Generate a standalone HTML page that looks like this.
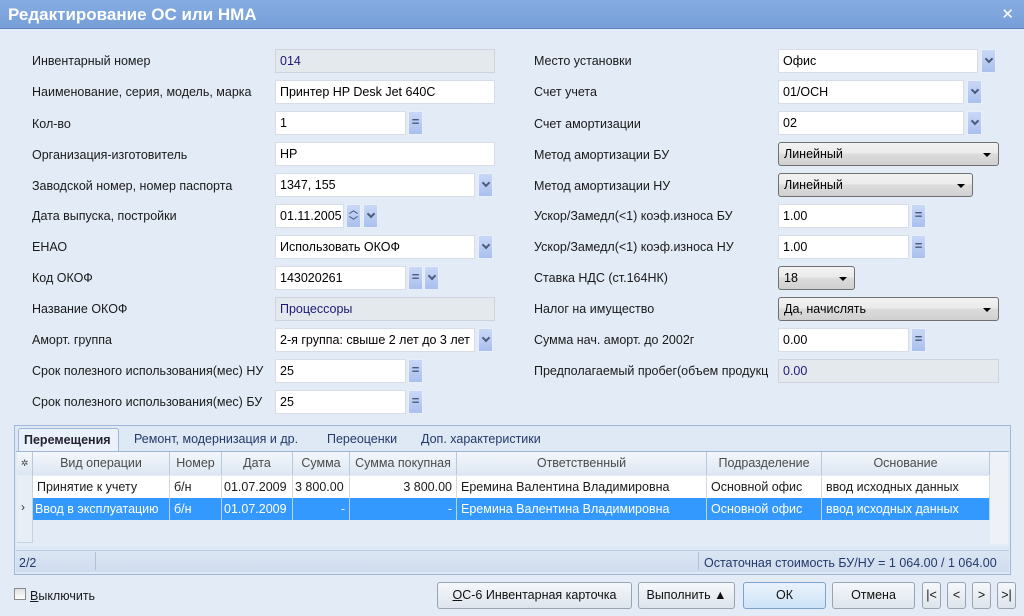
<!DOCTYPE html>
<html><head><meta charset="utf-8"><style>
*{box-sizing:border-box;margin:0;padding:0}
body{width:1024px;height:616px;overflow:hidden;background:#e3ecf6;font-family:"Liberation Sans","DejaVu Sans",sans-serif;font-size:12.5px;color:#1a1a1a;position:relative}
.a{position:absolute}
.title{left:0;top:0;width:1024px;height:29px;background:linear-gradient(#86ade2,#779fd8);border-bottom:1px solid #5f86c3;color:#fff;font-weight:bold;font-size:17px;padding:5px 0 0 8px}
.x{right:10px;top:5px;color:#fff;font-weight:bold;font-size:15px}
.lb{white-space:nowrap;height:14px;line-height:14px}
.in{height:24px;background:#fff;border:1px solid #d6dde6;padding:4px 0 0 4px;white-space:nowrap;overflow:hidden;color:#000}
.ro{background:#e4e9ee;border:1px solid #cdd4dc;color:#1a1a7a}
.bt{width:15px;height:24px;background:linear-gradient(#c9d8f6,#a9c0ee);border:1px solid #e8eefa;color:#4a5a7a;text-align:center;font-size:13px;line-height:20px;font-weight:bold}
.dd::after{content:"";position:absolute;left:4px;top:6px;width:4px;height:4px;border-right:2px solid #4a5a7a;border-bottom:2px solid #4a5a7a;transform:rotate(45deg)}
.sel{height:24px;border:1px solid #707070;border-radius:3px;background:linear-gradient(#f2f2f2 0,#ebebeb 45%,#dcdcdc 50%,#d0d0d0 100%);padding:4px 0 0 5px;color:#000}
.sel::after{content:"";position:absolute;right:7px;top:10px;border-left:4px solid transparent;border-right:4px solid transparent;border-top:4px solid #000}
.hd{top:452px;height:23px;background:linear-gradient(#f4f7fb,#dce6f2);border-right:1px solid #b9c9dd;color:#4a4a4a;text-align:center;line-height:23px}
.c{height:22px;line-height:22px;padding:0 4px;white-space:nowrap;overflow:hidden;border-right:1px solid #cfd8e3}
.sb{background:#3399ff;color:#fff;border-right:1px solid #b9d4ee}
.btn{top:582px;height:27px;border:1px solid #9aa4b0;border-radius:3px;background:linear-gradient(#f6f8fb,#dde4ec);text-align:center;line-height:25px;color:#111}
</style></head><body>
<div class="a title">Редактирование ОС или НМА</div>
<div class="a x">✕</div>

<div class="a lb" style="left:32px;top:54px">Инвентарный номер</div>
<div class="a lb" style="left:32px;top:85px">Наименование, серия, модель, марка</div>
<div class="a lb" style="left:32px;top:117px">Кол-во</div>
<div class="a lb" style="left:32px;top:148px">Организация-изготовитель</div>
<div class="a lb" style="left:32px;top:179px">Заводской номер, номер паспорта</div>
<div class="a lb" style="left:32px;top:209px">Дата выпуска, постройки</div>
<div class="a lb" style="left:32px;top:240px">ЕНАО</div>
<div class="a lb" style="left:32px;top:271px">Код ОКОФ</div>
<div class="a lb" style="left:32px;top:302px">Название ОКОФ</div>
<div class="a lb" style="left:32px;top:333px">Аморт. группа</div>
<div class="a lb" style="left:32px;top:364px">Срок полезного использования(мес) НУ</div>
<div class="a lb" style="left:32px;top:395px">Срок полезного использования(мес) БУ</div>

<div class="a in ro" style="left:275px;top:49px;width:220px">014</div>
<div class="a in" style="left:275px;top:80px;width:220px">Принтер HP Desk Jet 640C</div>
<div class="a in" style="left:275px;top:111px;width:131px">1</div><div class="a bt" style="left:408px;top:111px">=</div>
<div class="a in" style="left:275px;top:142px;width:220px">HP</div>
<div class="a in" style="left:275px;top:173px;width:200px">1347, 155</div><div class="a bt dd" style="left:478px;top:173px"></div>
<div class="a in" style="left:275px;top:204px;width:69px">01.11.2005</div>
<div class="a bt" style="left:346px;top:204px;font-size:9px;line-height:11px">︿<br>﹀</div><div class="a bt dd" style="left:363px;top:204px"></div>
<div class="a in" style="left:275px;top:235px;width:200px">Использовать ОКОФ</div><div class="a bt dd" style="left:478px;top:235px"></div>
<div class="a in" style="left:275px;top:266px;width:131px">143020261</div><div class="a bt" style="left:408px;top:266px">=</div><div class="a bt dd" style="left:424px;top:266px"></div>
<div class="a in ro" style="left:275px;top:297px;width:220px">Процессоры</div>
<div class="a in" style="left:275px;top:328px;width:200px">2-я группа: свыше 2 лет до 3 лет</div><div class="a bt dd" style="left:478px;top:328px"></div>
<div class="a in" style="left:275px;top:359px;width:131px">25</div><div class="a bt" style="left:408px;top:359px">=</div>
<div class="a in" style="left:275px;top:390px;width:131px">25</div><div class="a bt" style="left:408px;top:390px">=</div>

<div class="a lb" style="left:534px;top:54px">Место установки</div>
<div class="a lb" style="left:534px;top:85px">Счет учета</div>
<div class="a lb" style="left:534px;top:117px">Счет амортизации</div>
<div class="a lb" style="left:534px;top:148px">Метод амортизации БУ</div>
<div class="a lb" style="left:534px;top:179px">Метод амортизации НУ</div>
<div class="a lb" style="left:534px;top:209px">Ускор/Замедл(&lt;1) коэф.износа БУ</div>
<div class="a lb" style="left:534px;top:240px">Ускор/Замедл(&lt;1) коэф.износа НУ</div>
<div class="a lb" style="left:534px;top:271px">Ставка НДС (ст.164НК)</div>
<div class="a lb" style="left:534px;top:302px">Налог на имущество</div>
<div class="a lb" style="left:534px;top:333px">Сумма нач. аморт. до 2002г</div>
<div class="a lb" style="left:534px;top:364px;width:238px;overflow:hidden">Предполагаемый пробег(объем продукц</div>

<div class="a in" style="left:778px;top:49px;width:200px">Офис</div><div class="a bt dd" style="left:981px;top:49px"></div>
<div class="a in" style="left:778px;top:80px;width:186px">01/ОСН</div><div class="a bt dd" style="left:967px;top:80px"></div>
<div class="a in" style="left:778px;top:111px;width:186px">02</div><div class="a bt dd" style="left:967px;top:111px"></div>
<div class="a sel" style="left:778px;top:142px;width:221px">Линейный</div>
<div class="a sel" style="left:778px;top:173px;width:195px">Линейный</div>
<div class="a in" style="left:778px;top:204px;width:131px">1.00</div><div class="a bt" style="left:911px;top:204px">=</div>
<div class="a in" style="left:778px;top:235px;width:131px">1.00</div><div class="a bt" style="left:911px;top:235px">=</div>
<div class="a sel" style="left:778px;top:266px;width:77px">18</div>
<div class="a sel" style="left:778px;top:297px;width:221px">Да, начислять</div>
<div class="a in" style="left:778px;top:328px;width:131px">0.00</div><div class="a bt" style="left:911px;top:328px">=</div>
<div class="a in ro" style="left:778px;top:359px;width:221px">0.00</div>

<div class="a" style="left:14px;top:425px;width:997px;height:150px;border:1px solid #9fb8da;background:#dfe9f5"></div>
<div class="a" style="left:18px;top:428px;width:101px;height:24px;background:#eaf1fa;border:1px solid #9fb8da;border-bottom:none;border-radius:3px 3px 0 0;font-weight:bold;padding:4px 0 0 5px;color:#223">Перемещения</div>
<div class="a lb" style="left:134px;top:432px;color:#223a6a">Ремонт, модернизация и др.</div>
<div class="a lb" style="left:327px;top:432px;color:#223a6a">Переоценки</div>
<div class="a lb" style="left:421px;top:432px;color:#223a6a">Доп. характеристики</div>

<div class="a" style="left:16px;top:451px;width:993px;height:95px;background:#e3ecf6;border-top:1px solid #9fb8da"></div>
<div class="a hd" style="left:17px;width:16px;font-size:9px">✲</div>
<div class="a hd" style="left:33px;width:137px">Вид операции</div>
<div class="a hd" style="left:170px;width:52px">Номер</div>
<div class="a hd" style="left:222px;width:71px">Дата</div>
<div class="a hd" style="left:293px;width:57px">Сумма</div>
<div class="a hd" style="left:350px;width:107px">Сумма покупная</div>
<div class="a hd" style="left:457px;width:250px">Ответственный</div>
<div class="a hd" style="left:707px;width:115px">Подразделение</div>
<div class="a hd" style="left:822px;width:168px">Основание</div>
<div class="a" style="left:990px;top:452px;width:18px;height:92px;background:#eef2f7"></div>
<div class="a" style="left:17px;top:475px;width:16px;height:46px;background:#e8eef6;border-right:1px solid #c6d2e0"></div>
<div class="a" style="left:17px;top:521px;width:16px;height:22px;background:#e8eef6;border-right:1px solid #c6d2e0;border-bottom:1px solid #c6d2e0"></div>
<div class="a" style="left:21px;top:500px;font-size:12px;color:#333">›</div>

<div class="a" style="left:33px;top:476px;display:flex;background:#fff">
<div class="c" style="width:137px">Принятие к учету</div><div class="c" style="width:52px">б/н</div><div class="c" style="width:71px;padding:0 2px">01.07.2009</div><div class="c" style="width:57px;padding:0 2px">3 800.00</div><div class="c" style="width:107px;text-align:right">3 800.00</div><div class="c" style="width:250px">Еремина Валентина Владимировна</div><div class="c" style="width:115px">Основной офис</div><div class="c" style="width:168px">ввод исходных данных</div></div>
<div class="a" style="left:33px;top:498px;display:flex">
<div class="c sb" style="width:137px;padding:0 2px">Ввод в эксплуатацию</div><div class="c sb" style="width:52px">б/н</div><div class="c sb" style="width:71px;padding:0 2px">01.07.2009</div><div class="c sb" style="width:57px;text-align:right">-</div><div class="c sb" style="width:107px;text-align:right">-</div><div class="c sb" style="width:250px">Еремина Валентина Владимировна</div><div class="c sb" style="width:115px">Основной офис</div><div class="c sb" style="width:168px">ввод исходных данных</div></div>

<div class="a" style="left:16px;top:550px;width:993px;height:22px;background:linear-gradient(#dbe6f4,#cfdcee);border-top:1px solid #b9cbe2"></div>
<div class="a lb" style="left:19px;top:556px;color:#223a6a">2/2</div>
<div class="a" style="left:95px;top:552px;width:1px;height:18px;background:#b0c2da"></div>
<div class="a" style="left:698px;top:552px;width:1px;height:18px;background:#b0c2da"></div>
<div class="a lb" style="left:704px;top:556px;color:#223a6a">Остаточная стоимость БУ/НУ = 1 064.00 / 1 064.00</div>

<div class="a" style="left:14px;top:588px;width:12px;height:12px;border:1px solid #8a8a8a;background:linear-gradient(#e0e0e0,#fff)"></div>
<div class="a lb" style="left:30px;top:589px"><u>В</u>ыключить</div>
<div class="a btn" style="left:437px;width:195px"><u>О</u>С-6 Инвентарная карточка</div>
<div class="a btn" style="left:638px;width:97px">Выполнить ▲</div>
<div class="a btn" style="left:743px;width:83px;background:linear-gradient(#eaf3fc,#cde3f7);border-color:#7aa3cf">ОК</div>
<div class="a btn" style="left:832px;width:83px">Отмена</div>
<div class="a btn" style="left:922px;width:19px">|&lt;</div>
<div class="a btn" style="left:947px;width:19px">&lt;</div>
<div class="a btn" style="left:972px;width:19px">&gt;</div>
<div class="a btn" style="left:997px;width:19px">&gt;|</div>
</body></html>
